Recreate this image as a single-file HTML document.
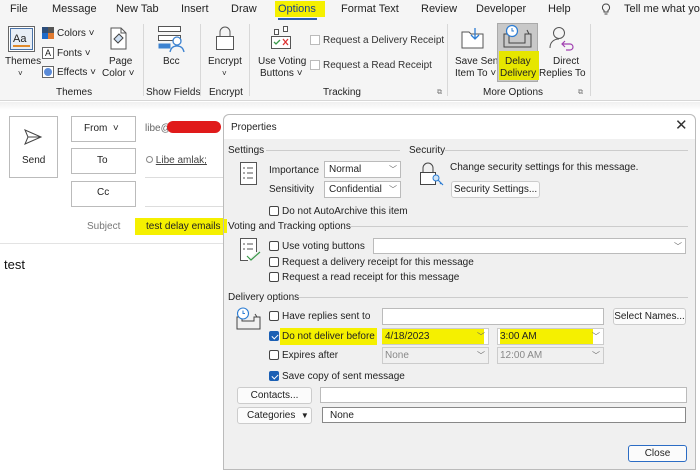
<!DOCTYPE html>
<html><head><meta charset="utf-8"><style>
*{margin:0;padding:0;box-sizing:border-box}
body{width:700px;height:470px;overflow:hidden;background:#fff;position:relative;font-family:"Liberation Sans",Arial,sans-serif;font-size:10px;color:#222}
.a{position:absolute;white-space:nowrap;line-height:15px}
.b{position:absolute}
.cb{position:absolute;width:10px;height:10px;border:1px solid #444;border-radius:2px;background:#fff}
.cb.on{background:#1a5fb4;border-color:#1a5fb4}
.cb.on:after{content:"";position:absolute;left:2.5px;top:0.5px;width:3px;height:5px;border:solid #fff;border-width:0 1.3px 1.3px 0;transform:rotate(45deg)}
.sel{position:absolute;background:#fff;border:1px solid #bbb;padding-left:4px;line-height:16px;font-size:10px}
.sel .ar{position:absolute;right:3px;top:0;color:#666;font-size:8px}
.btn{position:absolute;background:#fbfbfb;border:1px solid #ccc;border-radius:3px;text-align:center;line-height:16px;font-size:10px}
.gl{position:absolute;height:1px;background:#ccc}
.vs{position:absolute;width:1px;background:#d8d8d8}
</style></head><body>
<div class="b" style="left:0;top:0;width:700px;height:101px;background:#f5f5f5;border-bottom:1px solid #d6d6d6"></div>
<div class="a" style="left:10px;top:2px;font-size:11px">File</div>
<div class="a" style="left:52px;top:2px;font-size:11px">Message</div>
<div class="a" style="left:116px;top:2px;font-size:11px">New Tab</div>
<div class="a" style="left:181px;top:2px;font-size:11px">Insert</div>
<div class="a" style="left:231px;top:2px;font-size:11px">Draw</div>
<div class="b" style="left:275px;top:1px;width:50px;height:16px;background:#f5f000"></div>
<div class="a" style="left:278px;top:2px;font-size:11px;color:#1a3f8f">Options</div>
<div class="b" style="left:278px;top:18px;width:39px;height:2px;background:#2a5db0"></div>
<div class="a" style="left:341px;top:2px;font-size:11px">Format Text</div>
<div class="a" style="left:421px;top:2px;font-size:11px">Review</div>
<div class="a" style="left:476px;top:2px;font-size:11px">Developer</div>
<div class="a" style="left:548px;top:2px;font-size:11px">Help</div>
<svg class="b" style="left:601px;top:3px" width="10" height="13"><path d="M5 1a3.5 3.5 0 0 0-2 6.4V9h4V7.4A3.5 3.5 0 0 0 5 1zM3.5 11h3" fill="none" stroke="#444"/></svg>
<div class="a" style="left:624px;top:2px;font-size:11px">Tell me what yo</div>

<svg class="b" style="left:8px;top:26px" width="27" height="26"><rect x="0.5" y="0.5" width="26" height="25" fill="#fff" stroke="#666"/><rect x="2.5" y="2.5" width="22" height="21" fill="#e8eef6" stroke="#4a73a8"/><text x="5" y="16" font-size="11" font-family="Liberation Sans" fill="#222">Aa</text><rect x="5" y="19" width="17" height="2" fill="#e08a2c"/></svg>
<div class="a" style="left:5px;top:54px">Themes</div><div class="a" style="left:18px;top:66px;font-size:8px">˅</div>
<svg class="b" style="left:42px;top:27px" width="12" height="12"><rect width="6" height="6" fill="#2d4e7a"/><rect x="6" width="6" height="6" fill="#555"/><rect y="6" width="6" height="6" fill="#1e6ac8"/><rect x="6" y="6" width="6" height="6" fill="#e07a30"/></svg>
<div class="a" style="left:57px;top:26px">Colors ˅</div>
<div class="b" style="left:42px;top:47px;width:12px;height:12px;border:1px solid #666;font-size:9px;line-height:10px;text-align:center;background:#fff">A</div>
<div class="a" style="left:57px;top:46px">Fonts ˅</div>
<div class="b" style="left:42px;top:66px;width:12px;height:12px;border:1px solid #666;background:#fff"><div style="margin:1px;width:8px;height:8px;border-radius:50%;background:#5b8bd8"></div></div>
<div class="a" style="left:57px;top:65px">Effects ˅</div>
<svg class="b" style="left:108px;top:27px" width="20" height="24"><path d="M3 1h10l5 5v16H3z" fill="#fff" stroke="#555"/><path d="M13 1v5h5" fill="none" stroke="#555"/><path d="M6 12l5-5 4 4-5 5z" fill="#cfe0f3" stroke="#444"/></svg>
<div class="a" style="left:109px;top:54px">Page</div><div class="a" style="left:102px;top:66px">Color ˅</div>
<div class="a" style="left:56px;top:85px">Themes</div>
<div class="vs" style="left:143px;top:24px;height:72px"></div>
<svg class="b" style="left:158px;top:26px" width="28" height="27"><rect x="0.5" y="0.5" width="22" height="5" fill="#fff" stroke="#555"/><rect x="0.5" y="9.5" width="22" height="5" fill="#fff" stroke="#555"/><rect x="0.5" y="17.5" width="12" height="5" fill="#3c82d0"/><circle cx="19" cy="15" r="4" fill="#fff" stroke="#3c82d0" stroke-width="1.3"/><path d="M12 26c1-5 4-6 7-6s6 1 7 6" fill="none" stroke="#3c82d0" stroke-width="1.3"/></svg>
<div class="a" style="left:163px;top:54px">Bcc</div>
<div class="a" style="left:146px;top:85px">Show Fields</div>
<div class="vs" style="left:200px;top:24px;height:72px"></div>
<svg class="b" style="left:216px;top:26px" width="18" height="24"><rect x="0.5" y="10.5" width="17" height="13" fill="#fff" stroke="#555"/><path d="M4 10V6a5 5 0 0 1 10 0v4" fill="none" stroke="#555"/></svg>
<div class="a" style="left:208px;top:54px">Encrypt</div><div class="a" style="left:222px;top:66px;font-size:8px">˅</div>
<div class="a" style="left:209px;top:85px">Encrypt</div>
<div class="vs" style="left:249px;top:24px;height:72px"></div>
<svg class="b" style="left:270px;top:26px" width="22" height="24"><rect x="4.5" y="3.5" width="4" height="5" fill="#fff" stroke="#555"/><rect x="13.5" y="0.5" width="4" height="5" fill="#fff" stroke="#555"/><rect x="1.5" y="10.5" width="19" height="12" fill="#fff" stroke="#555"/><path d="M4 16l2 2 4-4" fill="none" stroke="#3a9a4a" stroke-width="1.3"/><path d="M13 13l5 6M18 13l-5 6" stroke="#d33" stroke-width="1.3"/></svg>
<div class="a" style="left:258px;top:54px">Use Voting</div><div class="a" style="left:260px;top:66px">Buttons ˅</div>
<div class="cb" style="left:310px;top:35px;border-color:#bbb;border-radius:0"></div>
<div class="a" style="left:323px;top:33px;color:#333">Request a Delivery Receipt</div>
<div class="cb" style="left:310px;top:60px;border-color:#bbb;border-radius:0"></div>
<div class="a" style="left:323px;top:58px;color:#333">Request a Read Receipt</div>
<div class="a" style="left:323px;top:85px">Tracking</div>
<div class="a" style="left:437px;top:85px;font-size:7px;color:#777">⧉</div>
<div class="vs" style="left:447px;top:24px;height:72px"></div>
<svg class="b" style="left:461px;top:26px" width="24" height="24"><path d="M1 6h7l2 2h12v14H1z" fill="#fff" stroke="#555"/><path d="M14 2v11M10 9l4 4 4-4" fill="none" stroke="#2b7cd3" stroke-width="1.3"/></svg>
<div class="a" style="left:455px;top:54px">Save Sent</div><div class="a" style="left:455px;top:66px">Item To ˅</div>
<div class="b" style="left:497px;top:23px;width:41px;height:59px;background:#c8c8c8;border:1px solid #aaa"></div>
<div class="b" style="left:499px;top:51px;width:40px;height:29px;background:#e6e600"></div>
<svg class="b" style="left:502px;top:24px" width="32" height="26"><path d="M2 10h5v9h16v-9h6v13H2z M5 10l2-4M27 10l-2-4" fill="none" stroke="#444"/><circle cx="10" cy="7" r="5.5" fill="#fff" stroke="#2b7cd3" stroke-width="1.2"/><path d="M10 4v3h2" fill="none" stroke="#2b7cd3"/></svg>
<div class="a" style="left:505px;top:54px">Delay</div><div class="a" style="left:500px;top:66px">Delivery</div>
<svg class="b" style="left:548px;top:26px" width="26" height="27"><circle cx="11" cy="7" r="5.5" fill="none" stroke="#555"/><path d="M2 22c0-6 4-9 9-9" fill="none" stroke="#555"/><path d="M14 18h8a3 3 0 0 1 0 6h-4M17 15l-3 3 3 3" fill="none" stroke="#a040b0" stroke-width="1.2"/></svg>
<div class="a" style="left:553px;top:54px">Direct</div><div class="a" style="left:539px;top:66px">Replies To</div>
<div class="a" style="left:483px;top:85px">More Options</div>
<div class="a" style="left:578px;top:85px;font-size:7px;color:#777">⧉</div>
<div class="vs" style="left:590px;top:24px;height:72px"></div>

<div class="b" style="left:0;top:102px;width:700px;height:8px;background:linear-gradient(#f0f0f0,#fff)"></div>
<div class="b" style="left:9px;top:116px;width:49px;height:62px;border:1px solid #bbb"></div>
<svg class="b" style="left:23px;top:128px" width="20" height="18"><path d="M2 2l16 7-16 7 3-7z M5 9h13" fill="none" stroke="#444"/></svg>
<div class="a" style="left:22px;top:153px">Send</div>
<div class="b" style="left:71px;top:116px;width:65px;height:26px;border:1px solid #bbb"></div>
<div class="a" style="left:84px;top:121px">From &nbsp;˅</div>
<div class="b" style="left:71px;top:148px;width:65px;height:26px;border:1px solid #bbb"></div>
<div class="a" style="left:97px;top:153px">To</div>
<div class="b" style="left:71px;top:181px;width:65px;height:26px;border:1px solid #bbb"></div>
<div class="a" style="left:97px;top:185px">Cc</div>
<div class="a" style="left:145px;top:121px;color:#666">libe@</div>
<div class="b" style="left:167px;top:121px;width:54px;height:12px;background:#e01a1a;border-radius:6px"></div>
<div class="a" style="left:146px;top:153px;color:#444"><span style="display:inline-block;width:7px;height:7px;border:1px solid #888;border-radius:50%"></span> <u>Libe amlak;</u></div>
<div class="gl" style="left:145px;top:177px;width:80px;background:#ddd"></div>
<div class="gl" style="left:145px;top:206px;width:80px;background:#ddd"></div>
<div class="a" style="left:87px;top:219px;color:#777">Subject</div>
<div class="b" style="left:135px;top:218px;width:94px;height:17px;background:#f5f000"></div>
<div class="a" style="left:146px;top:219px">test delay emails</div>
<div class="gl" style="left:0;top:243px;width:225px;background:#e3e3e3"></div>
<div class="a" style="left:4px;top:256px;font-size:13px;line-height:17px;color:#111">test</div>

<div class="b" style="left:223px;top:114px;width:473px;height:356px;background:#f0f0f0;border:1px solid #bbb;border-radius:6px 6px 0 0"></div>
<div class="b" style="left:224px;top:115px;width:471px;height:24px;background:#fff;border-radius:6px 6px 0 0"></div>
<div class="a" style="left:231px;top:120px">Properties</div>
<div class="a" style="left:675px;top:117px;font-size:15px;line-height:18px;color:#333">✕</div>

<div class="a" style="left:228px;top:143px">Settings</div>
<div class="gl" style="left:266px;top:150px;width:134px"></div>
<div class="a" style="left:409px;top:143px">Security</div>
<div class="gl" style="left:445px;top:150px;width:243px"></div>
<svg class="b" style="left:240px;top:162px" width="18" height="24"><rect x="0.5" y="0.5" width="16" height="22" fill="#fff" stroke="#555"/><path d="M3 6h2M3 11h2M3 16h2M7 6h6M7 11h6M7 16h6" stroke="#555"/></svg>
<div class="a" style="left:269px;top:163px">Importance</div>
<div class="sel" style="left:324px;top:161px;width:77px;height:17px">Normal<span class="ar">﹀</span></div>
<div class="a" style="left:269px;top:182px">Sensitivity</div>
<div class="sel" style="left:324px;top:181px;width:77px;height:17px">Confidential<span class="ar">﹀</span></div>
<div class="cb" style="left:269px;top:206px"></div>
<div class="a" style="left:282px;top:204px">Do not AutoArchive this item</div>
<svg class="b" style="left:419px;top:161px" width="26" height="27"><path d="M4 11V7a5 5 0 0 1 10 0v4" fill="none" stroke="#444"/><rect x="1.5" y="11.5" width="15" height="12" fill="#fff" stroke="#444"/><circle cx="17" cy="17" r="3" fill="#cfe4f7" stroke="#2b7cd3"/><path d="M19 19l5 5M22 22l-1 1" stroke="#2b7cd3" stroke-width="1.2"/></svg>
<div class="a" style="left:450px;top:160px">Change security settings for this message.</div>
<div class="btn" style="left:451px;top:181px;width:89px;height:17px">Security Settings...</div>

<div class="b" style="left:224px;top:219px;width:3px;height:14px;background:#f5f000"></div>
<div class="a" style="left:228px;top:219px">Voting and Tracking options</div>
<div class="gl" style="left:350px;top:226px;width:338px"></div>
<svg class="b" style="left:240px;top:238px" width="22" height="26"><path d="M16.5 14V0.5H0.5v22H8" fill="#fff" stroke="#555"/><path d="M3 6h2M3 11h2M7 6h6M7 11h6" stroke="#555"/><path d="M7 18l4 4 9-8" fill="none" stroke="#3a9a4a" stroke-width="1.2"/></svg>
<div class="cb" style="left:269px;top:241px"></div>
<div class="a" style="left:282px;top:239px">Use voting buttons</div>
<div class="sel" style="left:373px;top:238px;width:313px;height:16px"><span class="ar">﹀</span></div>
<div class="cb" style="left:269px;top:257px"></div>
<div class="a" style="left:282px;top:255px">Request a delivery receipt for this message</div>
<div class="cb" style="left:269px;top:272px"></div>
<div class="a" style="left:282px;top:270px">Request a read receipt for this message</div>

<div class="a" style="left:228px;top:290px">Delivery options</div>
<div class="gl" style="left:299px;top:297px;width:389px"></div>
<svg class="b" style="left:235px;top:307px" width="26" height="23"><path d="M2 10h5v4h12v-4h6v12H2z M5 10l2-3M22 10l-2-3" fill="none" stroke="#444"/><circle cx="8" cy="6.5" r="5.5" fill="#fff" stroke="#2b7cd3" stroke-width="1.1"/><path d="M8 3.5v3h2" fill="none" stroke="#2b7cd3"/></svg>
<div class="cb" style="left:269px;top:311px"></div>
<div class="a" style="left:282px;top:309px">Have replies sent to</div>
<div class="sel" style="left:382px;top:308px;width:222px;height:17px"></div>
<div class="btn" style="left:613px;top:308px;width:73px;height:17px">Select Names...</div>
<div class="cb on" style="left:269px;top:331px"></div>
<div class="b" style="left:280px;top:328px;width:97px;height:17px;background:#f5f000"></div>
<div class="a" style="left:282px;top:329px">Do not deliver before</div>
<div class="b" style="left:382px;top:328px;width:107px;height:17px;background:#fff;border:1px solid #ccc"></div>
<div class="b" style="left:382px;top:329px;width:102px;height:15px;background:#f5f000"></div>
<div class="a" style="left:385px;top:329px">4/18/2023</div>
<div class="a" style="left:477px;top:329px;font-size:8px;color:#666">﹀</div>
<div class="b" style="left:497px;top:328px;width:107px;height:17px;background:#fff;border:1px solid #ccc"></div>
<div class="b" style="left:500px;top:329px;width:93px;height:15px;background:#f5f000"></div>
<div class="a" style="left:500px;top:329px">3:00 AM</div>
<div class="a" style="left:592px;top:329px;font-size:8px;color:#666">﹀</div>
<div class="cb" style="left:269px;top:350px"></div>
<div class="a" style="left:282px;top:348px">Expires after</div>
<div class="b" style="left:382px;top:347px;width:107px;height:17px;background:#f0f0f0;border:1px solid #ccc"></div>
<div class="a" style="left:385px;top:348px;color:#888">None</div>
<div class="a" style="left:477px;top:348px;font-size:8px;color:#666">﹀</div>
<div class="b" style="left:497px;top:347px;width:107px;height:17px;background:#f0f0f0;border:1px solid #ccc"></div>
<div class="a" style="left:500px;top:348px;color:#888">12:00 AM</div>
<div class="a" style="left:592px;top:348px;font-size:8px;color:#666">﹀</div>
<div class="cb on" style="left:269px;top:371px"></div>
<div class="a" style="left:282px;top:369px">Save copy of sent message</div>
<div class="btn" style="left:237px;top:387px;width:75px;height:17px">Contacts...</div>
<div class="sel" style="left:320px;top:387px;width:367px;height:16px"></div>
<div class="btn" style="left:237px;top:407px;width:75px;height:17px;text-align:left;padding-left:9px">Categories &nbsp;<span style="font-size:8px">▼</span></div>
<div class="sel" style="left:322px;top:407px;width:364px;height:16px;border-color:#888;padding-left:7px">None</div>
<div class="btn" style="left:628px;top:445px;width:59px;height:17px;border:1px solid #2b6cc4">Close</div>
</body></html>
